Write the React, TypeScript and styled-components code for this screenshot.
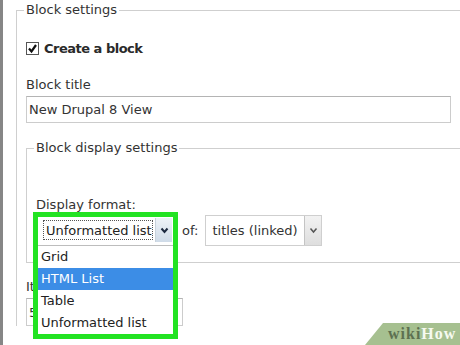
import styled, { createGlobalStyle } from "styled-components";

const GlobalStyle = createGlobalStyle`
  html, body {
    margin: 0;
    padding: 0;
    background: #fff;
  }
  body {
    width: 460px;
    height: 345px;
    overflow: hidden;
    font-family: "DejaVu Sans", Verdana, sans-serif;
    font-size: 13px;
    color: #333;
  }
`;

const Page = styled.div`
  position: relative;
  display: flex;
  width: 460px;
  height: 345px;
  overflow: hidden;
  background: #fff;
`;

const Rail = styled.div`
  flex: 0 0 3px;
  background: #868686;
`;

const Content = styled.div`
  flex: 0 0 auto;
  padding-left: 13px;
`;

// the form runs past the right edge of the crop, so the fieldsets are wider than the page
const Fieldset = styled.fieldset<{ $inner?: boolean }>`
  width: ${(p) => (p.$inner ? "480px" : "500px")};
  margin: ${(p) => (p.$inner ? "15px 0 0 0" : "0")};
  padding: ${(p) => (p.$inner ? "0 0 16px 9px" : "0 0 0 9px")};
  border: 1px solid #cfcfcf;
  border-right: 0;
  border-bottom: ${(p) => (p.$inner ? "1px solid #cfcfcf" : "0")};
  min-width: 0;
`;

const Legend = styled.legend`
  margin-left: -2px;
  padding: 0 2px;
  line-height: 20px;
  font-size: 13px;
  color: #333;
`;

const CheckRow = styled.div`
  display: flex;
  align-items: center;
  gap: 5px;
  height: 20px;
  margin-top: 18px;
  font-weight: bold;
  letter-spacing: -0.5px;
  color: #2a2a2a;
`;

const CheckBox = styled.span`
  display: inline-flex;
  width: 13px;
  height: 13px;
`;

const Label = styled.div<{ $top: number }>`
  margin-top: ${(p) => p.$top}px;
  line-height: 18px;
  color: #333;
`;

const TextInput = styled.div<{ $width: number; $height: number }>`
  box-sizing: border-box;
  width: ${(p) => p.$width}px;
  height: ${(p) => p.$height}px;
  margin-top: 2px;
  padding-left: 2px;
  display: flex;
  align-items: center;
  border: 1px solid #cccccc;
  border-top-color: #b4b4b4;
  background: #fff;
  color: #333;
`;

const SelectRow = styled.div`
  display: flex;
  align-items: center;
  gap: 7px;
  margin-top: 1px;
`;

const FormatSelect = styled.div`
  position: relative;
  box-sizing: border-box;
  width: 139px;
  height: 31px;
  display: flex;
  align-items: stretch;
  border: 1px solid #bdbdbd;
  background: #fff;
  padding: 2px 2px 3px 2px;
`;

const FocusValue = styled.div`
  flex: 1;
  display: flex;
  align-items: center;
  margin: 2px 2px 2px 4px;
  padding-left: 2px;
  border: 1px dotted #555;
  white-space: nowrap;
  color: #222;
`;

const Arrow = styled.div<{ $blue?: boolean }>`
  flex: 0 0 16px;
  display: flex;
  align-items: center;
  justify-content: center;
  border-left: 1px solid ${(p) => (p.$blue ? "#c8d2dc" : "#c4c4c4")};
  background: ${(p) =>
    p.$blue ? "linear-gradient(#eef3f8, #cfdbe8)" : "linear-gradient(#f2f2f2, #dedede)"};
`;

const OfText = styled.span`
  color: #333;
`;

const PlainSelect = styled.div`
  box-sizing: border-box;
  width: 117px;
  height: 31px;
  display: flex;
  border: 1px solid #cfcfcf;
  background: #fff;
`;

const PlainValue = styled.div`
  flex: 1;
  display: flex;
  align-items: center;
  padding-left: 6px;
  white-space: nowrap;
  color: #333;
`;

const OptionList = styled.ul`
  position: absolute;
  left: 1px;
  top: 30px;
  width: 135px;
  margin: 0;
  padding: 0;
  list-style: none;
  background: #fff;
  z-index: 2;
`;

const Option = styled.li<{ $active?: boolean }>`
  height: 22px;
  line-height: 22px;
  padding-left: 3px;
  white-space: nowrap;
  background: ${(p) => (p.$active ? "#3c8de6" : "#fff")};
  color: ${(p) => (p.$active ? "#fff" : "#222")};
`;

const Highlight = styled.div`
  position: absolute;
  left: -4px;
  top: -4px;
  width: 145px;
  height: 127px;
  box-sizing: border-box;
  border: 5px solid #22e322;
  pointer-events: none;
  z-index: 3;
`;

const Watermark = styled.div`
  position: absolute;
  right: 0;
  bottom: 0;
  width: 95px;
  height: 22px;
  padding-left: 23px;
  box-sizing: border-box;
  background: #a6c090;
  clip-path: polygon(18px 0, 100% 0, 100% 100%, 0 100%);
  font-family: "Liberation Serif", "Times New Roman", serif;
  font-weight: bold;
  font-size: 16px;
  letter-spacing: 1px;
  line-height: 22px;
  z-index: 4;
`;

const Wiki = styled.span`
  color: #5d7050;
`;

const How = styled.span`
  color: #f6faf0;
`;

function Chevron({ color, width }: { color: string; width: number }) {
  return (
    <svg width="9" height="7" viewBox="0 0 9 7">
      <polyline points="1.5,1.5 4.5,5 7.5,1.5" fill="none" stroke={color} strokeWidth={width} />
    </svg>
  );
}

export default function App() {
  return (
    <>
      <GlobalStyle />
      <Page>
        <Rail />
        <Content>
          <Fieldset>
            <Legend>Block settings</Legend>
            <CheckRow>
              <CheckBox>
                <svg width="13" height="13" viewBox="0 0 13 13">
                  <rect x="0.5" y="0.5" width="12" height="12" fill="#fff" stroke="#555" />
                  <polyline points="3,6.5 5.5,9.5 10,3" fill="none" stroke="#111" strokeWidth="2.2" />
                </svg>
              </CheckBox>
              Create a block
            </CheckRow>
            <Label $top={18}>Block title</Label>
            <TextInput $width={425} $height={27}>New Drupal 8 View</TextInput>

            <Fieldset $inner>
              <Legend>Block display settings</Legend>
              <Label $top={38}>Display format:</Label>
              <SelectRow>
                <FormatSelect>
                  <FocusValue>Unformatted list</FocusValue>
                  <Arrow $blue>
                    <Chevron color="#1d2a40" width={2} />
                  </Arrow>
                  <OptionList>
                    <Option>Grid</Option>
                    <Option $active>HTML List</Option>
                    <Option>Table</Option>
                    <Option>Unformatted list</Option>
                  </OptionList>
                  <Highlight />
                </FormatSelect>
                <OfText>of:</OfText>
                <PlainSelect>
                  <PlainValue>titles (linked)</PlainValue>
                  <Arrow>
                    <Chevron color="#555" width={1.5} />
                  </Arrow>
                </PlainSelect>
              </SelectRow>
            </Fieldset>

            <Label $top={15}>Items per page</Label>
            <TextInput $width={157} $height={28}>5</TextInput>
          </Fieldset>
        </Content>
        <Watermark>
          <Wiki>wiki</Wiki>
          <How>How</How>
        </Watermark>
      </Page>
    </>
  );
}
